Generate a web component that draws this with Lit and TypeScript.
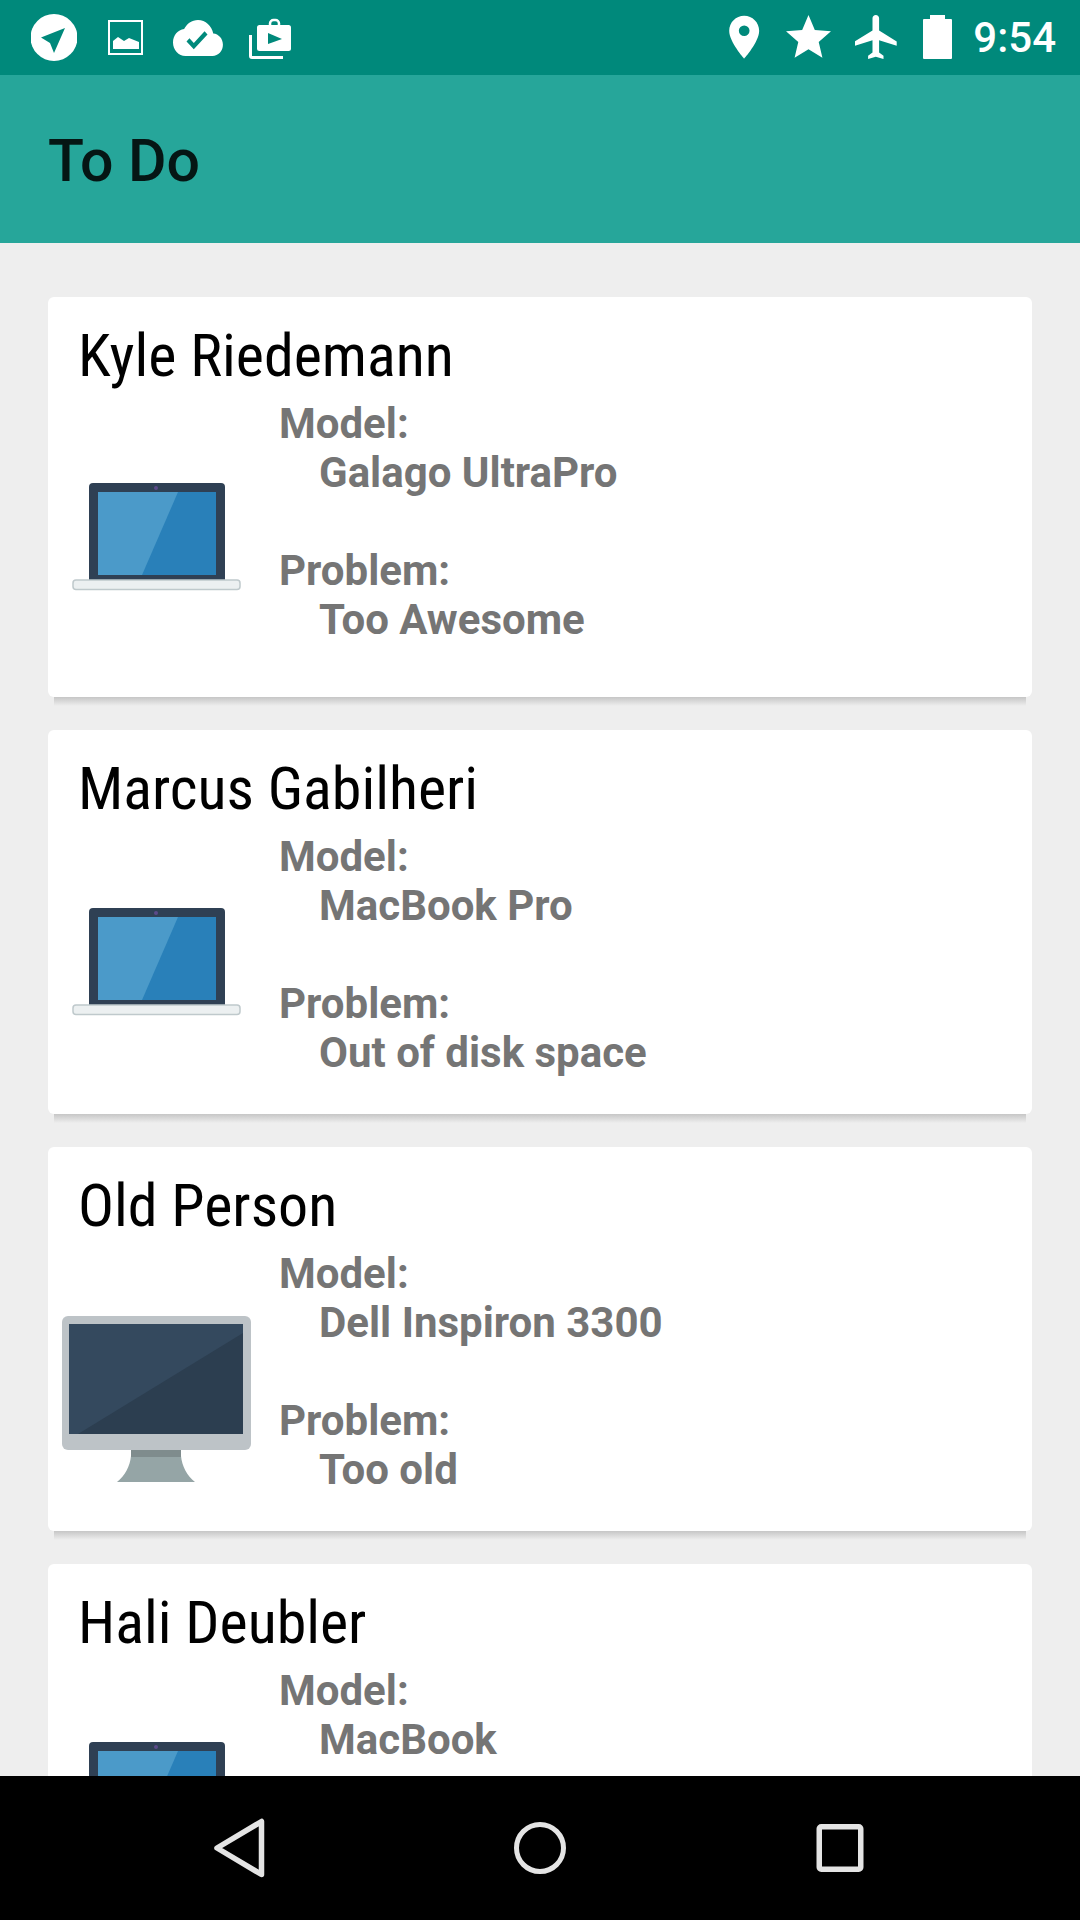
import { LitElement, html, css, svg } from 'lit';
import { customElement } from 'lit/decorators.js';

type Ticket = { name: string; model: string; problem?: string; device: 'laptop' | 'desktop'; tall?: boolean };

const tickets: Ticket[] = [
  { name: 'Kyle Riedemann', model: 'Galago UltraPro', problem: 'Too Awesome', device: 'laptop', tall: true },
  { name: 'Marcus Gabilheri', model: 'MacBook Pro', problem: 'Out of disk space', device: 'laptop' },
  { name: 'Old Person', model: 'Dell Inspiron 3300', problem: 'Too old', device: 'desktop' },
  // the rest of this card is hidden behind the nav bar in the screenshot
  { name: 'Hali Deubler', model: 'MacBook', device: 'laptop' },
];

const laptop = svg`
  <path d="M27 176V82q0-4 4-4h128q4 0 4 4v94z" fill="#2f4054"/>
  <rect x="36" y="87" width="118" height="83" fill="#2980b9"/>
  <polygon points="36,87 116,87 80,170 36,170" fill="#4b9ac9"/>
  <circle cx="94" cy="83" r="2" fill="#5b4a8a"/>
  <rect x="11" y="175" width="167" height="9.5" rx="3" fill="#ecf0f1" stroke="#bfc9cc" stroke-width="1.5"/>
`;

const desktop = svg`
  <path d="M69 203h50v6c1 10 6 20 14 26H55c8-6 13-16 14-26z" fill="#95a5a6"/>
  <rect x="69" y="203" width="50" height="7" fill="#7f8c8d"/>
  <rect x="0" y="69" width="189" height="134" rx="6" fill="#bdc3c7"/>
  <rect x="7" y="77" width="174" height="110" fill="#34495e"/>
  <polygon points="181,86 181,187 16,187" fill="#2c3e50"/>
`;

@customElement('app-root')
export class AppRoot extends LitElement {
  static styles = css`
    :host {
      display: flex;
      flex-direction: column;
      height: 1920px;
      background: #eeeeee;
      font-family: Roboto, sans-serif;
    }
    svg {
      display: block;
      flex: none;
    }

    .status {
      display: flex;
      align-items: center;
      height: 75px;
      flex: none;
      background: #00897b;
      color: #fff;
    }
    .status .left,
    .status .right {
      display: flex;
      align-items: center;
    }
    .status .left {
      gap: 26px;
      padding-left: 31px;
    }
    .status .right {
      gap: 23px;
      margin-left: auto;
      padding-right: 24px;
    }
    .clock {
      margin-left: -2px;
      font-size: 42px;
      font-weight: 500;
      line-height: 75px;
    }

    .toolbar {
      display: flex;
      align-items: center;
      height: 168px;
      box-sizing: border-box;
      flex: none;
      padding: 3px 0 0 48px;
      background: #26a69a;
      color: rgba(0, 0, 0, 0.87);
      font-size: 59px;
      font-weight: 500;
    }

    .list {
      flex: 1;
      min-height: 0;
      overflow: hidden;
      display: flex;
      flex-direction: column;
      gap: 33px;
      padding: 54px 48px 0;
    }

    .card {
      position: relative;
      flex: none;
      padding: 0 30px 24px;
      background: #fff;
      border-radius: 6px;
    }
    .card::after {
      content: '';
      position: absolute;
      left: 6px;
      right: 6px;
      top: 100%;
      height: 9px;
      background: linear-gradient(#c6c6c6, #eeeeee);
    }
    .name {
      height: 100px;
      padding-top: 24px;
      box-sizing: border-box;
      font-size: 60px;
      line-height: 70px;
      color: #000;
      font-stretch: 75%;
      white-space: nowrap;
    }
    .row {
      display: flex;
      align-items: center;
      margin-left: -16px;
    }
    .info {
      align-self: flex-start;
      padding: 2px 0 13px 28px;
      font-size: 42px;
      line-height: 49px;
      font-weight: 700;
      color: #757575;
    }
    .card.tall .info {
      padding-bottom: 29px;
    }
    .info .value {
      padding-left: 40px;
    }
    .info .value.spaced {
      margin-bottom: 49px;
    }

    .nav {
      display: flex;
      align-items: center;
      justify-content: space-between;
      height: 144px;
      flex: none;
      padding: 0 210px;
      background: #000;
    }
  `;

  private statusLeft() {
    return html`
      <svg width="46" height="75" viewBox="31 0 46 75">
        <circle cx="54" cy="37.5" r="23.5" fill="#fff"/>
        <polygon points="65,28 41,37.5 50,43 54,53" fill="#00897b"/>
      </svg>
      <svg width="40" height="75" viewBox="103 0 40 75">
        <rect x="109" y="21" width="33" height="33" fill="none" stroke="#fff" stroke-width="2"/>
        <path d="M113 49v-8l5-4 6 4 5-3 5 2 5 2v7z" fill="#fff"/>
      </svg>
      <svg width="54" height="75" viewBox="169 0 54 75">
        <path transform="translate(173 11) scale(2.08 2.25)" fill="#fff"
          d="M19.35 10.04C18.67 6.59 15.64 4 12 4 9.11 4 6.6 5.64 5.35 8.04 2.34 8.36 0 10.91 0 14c0 3.31 2.69 6 6 6h13c2.76 0 5-2.24 5-5 0-2.64-2.05-4.78-4.65-4.96zM10 17l-3.5-3.5 1.41-1.41L10 14.17 15.18 9l1.41 1.41L10 17z"/>
      </svg>
      <svg width="42" height="75" viewBox="249 0 42 75">
        <rect x="270" y="20" width="9" height="8" rx="3.5" fill="none" stroke="#fff" stroke-width="2.5"/>
        <rect x="257" y="25" width="34" height="26" rx="2.5" fill="#fff"/>
        <polygon points="268,33 268,44 282,39" fill="#00897b"/>
        <path d="M250.5 35v21q0 1.5 1.5 1.5h31" fill="none" stroke="#fff" stroke-width="3"/>
      </svg>
    `;
  }

  private statusRight() {
    return html`
      <svg width="34" height="75" viewBox="729 0 34 75">
        <path transform="translate(718.5 11.5) scale(2.14)" fill="#fff"
          d="M12 2C8.13 2 5 5.13 5 9c0 5.25 7 13 7 13s7-7.75 7-13c0-3.87-3.13-7-7-7zm0 9.5a2.5 2.5 0 0 1 0-5 2.5 2.5 0 0 1 0 5z"/>
      </svg>
      <svg width="46" height="75" viewBox="786 0 46 75">
        <path transform="translate(781.5 10.5) scale(2.25)" fill="#fff"
          d="M12 17.27L18.18 21l-1.64-7.03L22 9.24l-7.19-.61L12 2 9.19 8.63 2 9.24l5.46 4.73L5.82 21z"/>
      </svg>
      <svg width="45" height="75" viewBox="855 0 45 75">
        <path transform="translate(850.5 10.6) scale(2.2)" fill="#fff"
          d="M21 16v-2l-8-5V3.5c0-.83-.67-1.5-1.5-1.5S10 2.67 10 3.5V9l-8 5v2l8-2.5V19l-2 1.5V22l3.5-1 3.5 1v-1.5L13 19v-5.5l8 2.5z"/>
      </svg>
      <svg width="29" height="75" viewBox="923 0 29 75">
        <rect x="930" y="15" width="15" height="5" fill="#fff"/>
        <rect x="923" y="19" width="29" height="40" rx="1" fill="#fff"/>
      </svg>
      <span class="clock">9:54</span>
    `;
  }

  private card(t: Ticket) {
    return html`
      <div class="card ${t.tall ? 'tall' : ''}">
        <div class="name">${t.name}</div>
        <div class="row">
          <svg width="189" height="260" viewBox="0 0 189 260">${t.device === 'laptop' ? laptop : desktop}</svg>
          <div class="info">
            <div>Model:</div>
            <div class="value spaced">${t.model}</div>
            ${t.problem
              ? html`<div>Problem:</div>
                  <div class="value">${t.problem}</div>`
              : ''}
          </div>
        </div>
      </div>
    `;
  }

  render() {
    return html`
      <div class="status">
        <div class="left">${this.statusLeft()}</div>
        <div class="right">${this.statusRight()}</div>
      </div>
      <div class="toolbar">To Do</div>
      <div class="list">${tickets.map((t) => this.card(t))}</div>
      <div class="nav">
        <svg width="60" height="60" viewBox="0 0 60 60">
          <path d="M51.5 3.5v53L7 30z" fill="none" stroke="#e4e4e4" stroke-width="5.5" stroke-linejoin="round"/>
        </svg>
        <svg width="60" height="60" viewBox="0 0 60 60">
          <circle cx="30" cy="30" r="23.5" fill="none" stroke="#e4e4e4" stroke-width="5"/>
        </svg>
        <svg width="60" height="60" viewBox="0 0 60 60">
          <rect x="9.25" y="8.75" width="41.5" height="42.5" rx="2" fill="none" stroke="#e4e4e4" stroke-width="5.5"/>
        </svg>
      </div>
    `;
  }
}
